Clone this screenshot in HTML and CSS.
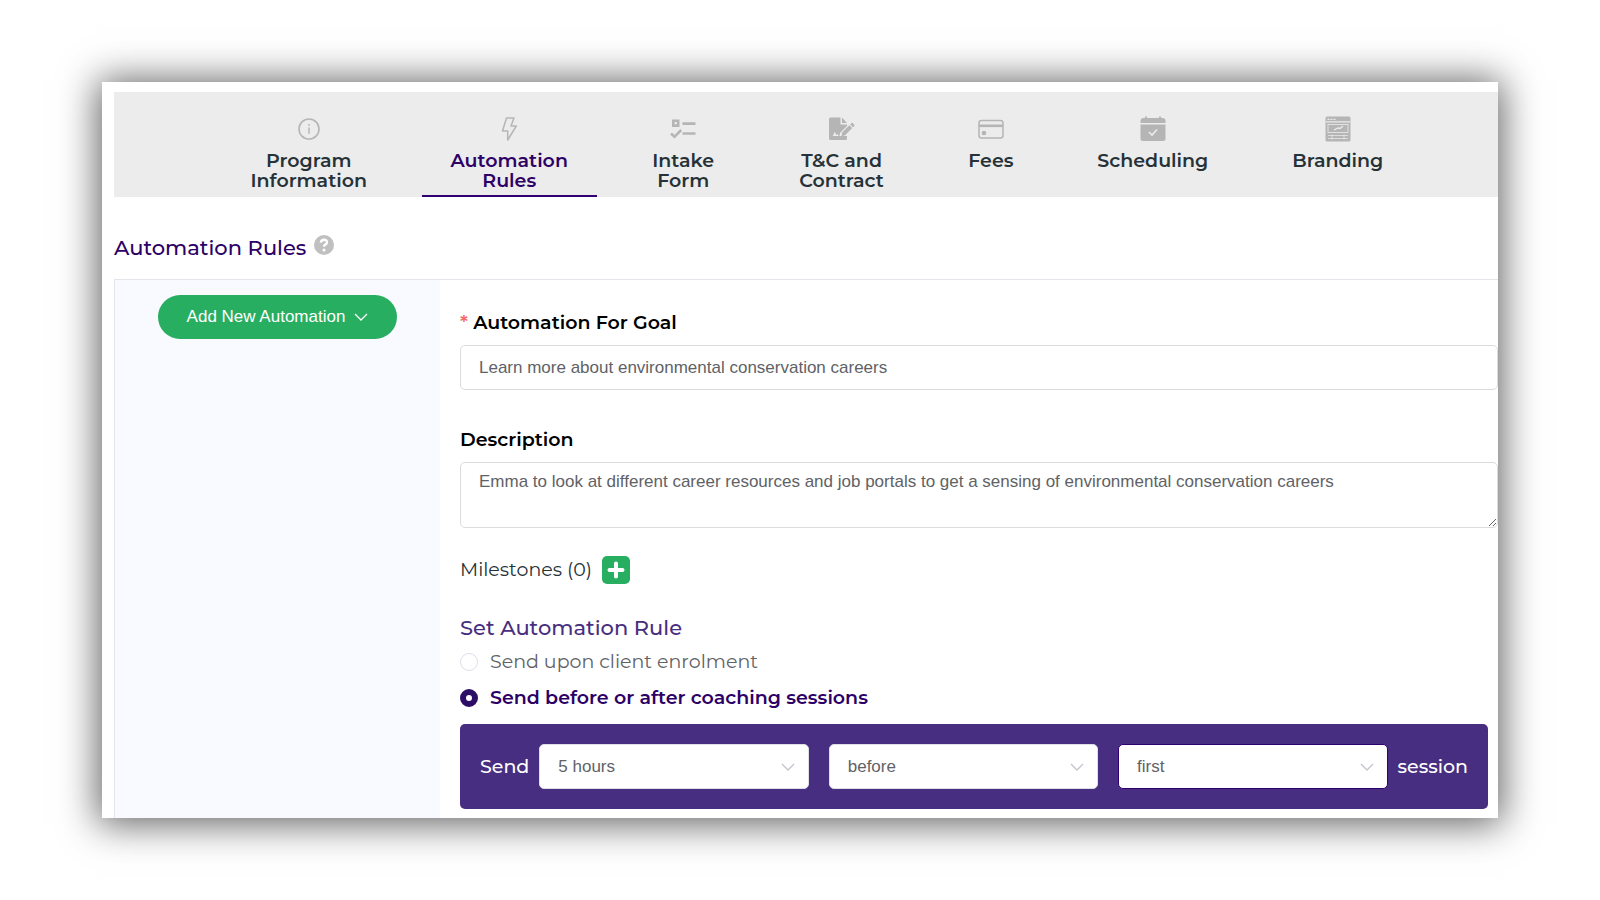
FILE: index.html
```html
<!DOCTYPE html>
<html lang="en">
<head>
    <meta charset="UTF-8">
    <meta name="viewport" content="width=device-width, initial-scale=1.0">
    <title>Automation Rules</title>
    <link rel="stylesheet" href="styles.css">
</head>
<body>
    <main class="panel">
        <!-- Program setup steps -->
        <nav class="tabs">
            <a href="#" class="tab">
                <svg class="icon" viewBox="0 0 26 26" fill="none" stroke="currentColor">
                    <circle cx="13" cy="13" r="10" stroke-width="1.6"/>
                    <path d="M13 11.6v6.2M13 8v1.7" stroke-width="1.5"/>
                </svg>
                <span>Program Information</span>
            </a>
            <a href="#" class="tab active">
                <svg class="icon" viewBox="0 0 26 26" fill="none" stroke="currentColor" stroke-width="1.5" stroke-linejoin="round">
                    <path d="M10.500 2H18l-3 8h5.300L11.700 24v-9H6.500z"/>
                </svg>
                <span>Automation Rules</span>
            </a>
            <a href="#" class="tab">
                <svg class="icon" viewBox="0 0 26 26" fill="none" stroke="currentColor">
                    <path d="M3.300 4.700h4.900v4.900H3.300z" stroke-width="2.600"/>
                    <path d="M12.500 7.600h13M12.500 17.500h13" stroke-width="2.600"/>
                    <path d="M1 17.500l3.500 3.300L11.200 14" stroke-width="2.600"/>
                </svg>
                <span>Intake Form</span>
            </a>
            <a href="#" class="tab">
                <svg class="icon" viewBox="0 0 26 26" fill="currentColor">
                    <path d="M2 1.500h9.500v7H18l.2 1.300-7.200 7.300-.3 2.600H9.500L8.300 18l-1.100 1-1.300-3.300L3.700 20H18v2.500q0 1.500-1.500 1.500h-15Q0 24 0 22.500V3q0-1.500 1.500-1.500z"/>
                    <path d="M13 1.500L18 7h-5zM12.500 20l.6-3.400 7.300-7.300 2.800 2.800-7.300 7.300zM21.200 8.400l1.300-1.300q.6-.6 1.200 0l1.600 1.600q.6.6 0 1.200L24 11.200z"/>
                </svg>
                <span>T&amp;C and Contract</span>
            </a>
            <a href="#" class="tab">
                <svg class="icon" viewBox="0 0 26 26" fill="none" stroke="currentColor">
                    <rect x="1" y="4.500" width="24" height="17.500" rx="2.500" stroke-width="1.500"/>
                    <path d="M1 9.800h24" stroke-width="2.600"/>
                    <circle cx="6" cy="17" r="2.300" fill="currentColor" stroke="none"/>
                </svg>
                <span>Fees</span>
            </a>
            <a href="#" class="tab">
                <svg class="icon" viewBox="0 0 26 26" fill="currentColor">
                    <path d="M.5 7V5q0-3 3-3H5V.5h2V2h12V.5h2V2h1.500q3 0 3 3v2z"/>
                    <path d="M.5 8.500h25v14q0 2.500-2.500 2.500H3Q.5 25 .5 22.500z"/>
                    <path d="M9 16l3 3 5-5.500" fill="none" stroke="#ececec" stroke-width="1.600"/>
                </svg>
                <span>Scheduling</span>
            </a>
            <a href="#" class="tab">
                <svg class="icon" viewBox="0 0 26 26" fill="currentColor">
                    <rect x=".5" y=".5" width="25" height="25" rx="1.500"/>
                    <g fill="none" stroke="#ececec">
                        <path d="M1 5.800h24M2.500 3.300h2M5.500 3.300h2M8.500 3.300h2" stroke-width="1.200"/>
                        <rect x="3" y="8.500" width="20" height="8" stroke-width=".8"/>
                        <path d="M9 14l4-2 2 .5 3-2.500" stroke-width="1.300"/>
                        <path d="M3 19.500h20M3 22.500h20M7 18.500v5M19 18.500v5" stroke-width=".7"/>
                    </g>
                </svg>
                <span>Branding</span>
            </a>
        </nav>

        <h1 class="page-title">
            Automation Rules
            <svg class="help" viewBox="0 0 20 20">
                <circle cx="10" cy="10" r="10" fill="#c0c0c0"/>
                <path d="M6.800 7.600Q7.200 4.700 10 4.700t3 2.500q0 1.500-1.700 2.400Q10 10.300 10 11.800" fill="none" stroke="#fff" stroke-width="2.400"/>
                <circle cx="10" cy="15" r="1.500" fill="#fff"/>
            </svg>
        </h1>

        <div class="content">
            <aside class="sidebar">
                <button type="button" class="add-btn">
                    Add New Automation
                    <svg class="chevron" viewBox="0 0 14 8"><path d="M1 1l6 6 6-6"/></svg>
                </button>
            </aside>

            <form class="rule-form">
                <label class="label" for="goal"><span class="required">*</span> Automation For Goal</label>
                <input class="field" type="text" id="goal" value="Learn more about environmental conservation careers">

                <label class="label spaced" for="description">Description</label>
                <textarea class="field area" id="description">Emma to look at different career resources and job portals to get a sensing of environmental conservation careers</textarea>

                <div class="milestones">
                    <span>Milestones (0)</span>
                    <button type="button" class="plus-btn" aria-label="Add milestone">
                        <svg viewBox="0 0 28 28"><path d="M14 7.500v13M7.500 14h13"/></svg>
                    </button>
                </div>

                <h2 class="rule-title">Set Automation Rule</h2>
                <label class="option">
                    <input type="radio" name="rule" value="enrolment">
                    <span>Send upon client enrolment</span>
                </label>
                <label class="option">
                    <input type="radio" name="rule" value="sessions" checked>
                    <span>Send before or after coaching sessions</span>
                </label>

                <!-- Timing of the message -->
                <div class="timing">
                    <label for="delay">Send</label>
                    <div class="selects">
                        <div class="select">
                            <select id="delay"><option>5 hours</option></select>
                            <svg class="chevron" viewBox="0 0 14 8"><path d="M1 1l6 6 6-6"/></svg>
                        </div>
                        <div class="select">
                            <select aria-label="Before or after"><option>before</option><option>after</option></select>
                            <svg class="chevron" viewBox="0 0 14 8"><path d="M1 1l6 6 6-6"/></svg>
                        </div>
                        <div class="select current">
                            <select id="session"><option>first</option></select>
                            <svg class="chevron" viewBox="0 0 14 8"><path d="M1 1l6 6 6-6"/></svg>
                        </div>
                    </div>
                    <label for="session">session</label>
                </div>
            </form>
        </div>
    </main>
</body>
</html>
```
FILE: styles.css
```css
* {
    box-sizing: border-box;
}
body {
    margin: 0;
    padding: 82px 102px;
    background: #fff;
    color: #263238;
    font-family: Montserrat, Inter, sans-serif;
    font-size: 19px;
    line-height: 24px;
}
.panel {
    padding: 10px 0 0 12px;
    background: #fff;
    box-shadow: 0 2px 36px 4px rgba(0, 0, 0, 0.62);
    overflow: hidden;
}
.tabs {
    display: grid;
    grid-template-columns: 175fr 175fr 122fr 144fr 104fr 169fr 150fr;
    column-gap: 25px;
    height: 105px;
    padding: 0 85px 0 107px;
    background: #ececec;
}
.tab {
    display: flex;
    flex-direction: column;
    align-items: center;
    padding: 24px 20px 0;
    border-bottom: 2px solid transparent;
    color: #263238;
    font-weight: 600;
    line-height: 20px;
    text-align: center;
    text-decoration: none;
}
.tab.active {
    border-color: #310070;
    color: #2c0066;
}
.icon {
    width: 26px;
    height: 26px;
    margin-bottom: 9px;
    color: #b5b5b5;
    flex-shrink: 0;
}
.page-title {
    display: flex;
    align-items: center;
    gap: 8px;
    margin: 38px 0 19px;
    color: #2c0066;
    font-size: 21px;
    font-weight: 500;
    line-height: 25px;
}
.help {
    width: 20px;
    height: 20px;
    margin-bottom: 5px;
}
.content {
    display: flex;
    border-top: 1px solid #e4e6ec;
    border-left: 1px solid #e4e6ec;
}
.sidebar {
    flex: 0 0 325px;
    padding: 15px 43px;
    background: #f9faff;
}
.add-btn {
    display: flex;
    align-items: center;
    justify-content: center;
    gap: 9px;
    width: 100%;
    height: 44px;
    padding: 0;
    border: 0;
    border-radius: 22px;
    background: #27ae60;
    color: #fff;
    font-family: "Liberation Sans", Arial, sans-serif;
    font-size: 17px;
    cursor: pointer;
}
.chevron {
    width: 14px;
    height: 8px;
    fill: none;
    stroke: currentColor;
    stroke-width: 1.3;
}
.rule-form {
    flex: 1;
    min-width: 0;
    padding: 31px 0 9px 20px;
}
.label {
    display: block;
    margin-bottom: 10px;
    color: #000;
    font-weight: 600;
}
.label.spaced {
    margin-top: 38px;
}
.required {
    color: #f56c6c;
}
.field {
    display: block;
    width: 100%;
    height: 45px;
    padding: 0 18px;
    border: 1px solid #dcdcdc;
    border-radius: 5px;
    background: #fff;
    color: #606266;
    font-family: "Liberation Sans", Arial, sans-serif;
    font-size: 17px;
}
.area {
    height: 66px;
    padding: 7px 18px;
    line-height: 24px;
    resize: vertical;
}
.milestones {
    display: flex;
    align-items: center;
    gap: 10px;
    margin: 28px 0 32px;
}
.plus-btn {
    width: 28px;
    height: 28px;
    padding: 0;
    border: 0;
    border-radius: 5px;
    background: #27ae60;
    cursor: pointer;
}
.plus-btn svg {
    display: block;
    stroke: #fff;
    stroke-width: 4;
    stroke-linecap: round;
}
.rule-title {
    margin: 0 0 10px;
    color: #482e80;
    font-size: 21px;
    font-weight: 500;
    line-height: 24px;
}
.option {
    display: flex;
    align-items: center;
    gap: 12px;
    margin-bottom: 12px;
    color: #606266;
}
.option input {
    appearance: none;
    width: 18px;
    height: 18px;
    margin: 0;
    border: 1px solid #dcdfe6;
    border-radius: 50%;
    background: #fff;
}
.option input:checked {
    border: 6px solid #2c0e66;
}
.option input:checked + span {
    color: #2c0066;
    font-weight: 600;
}
.timing {
    display: flex;
    align-items: center;
    gap: 10px;
    margin: 14px 10px 0 0;
    padding: 20px;
    border-radius: 5px;
    background: #482e80;
    color: #fff;
    font-weight: 500;
}
.selects {
    display: flex;
    flex: 1;
    gap: 20px;
}
.select {
    position: relative;
    flex: 1;
}
.select select {
    appearance: none;
    display: block;
    width: 100%;
    height: 45px;
    padding: 0 18px;
    border: 1px solid #dcdfe6;
    border-radius: 5px;
    background: #fff;
    color: #606266;
    font-family: "Liberation Sans", Arial, sans-serif;
    font-size: 17px;
}
.select.current select {
    border-color: #310070;
}
.select .chevron {
    position: absolute;
    top: 19px;
    right: 14px;
    color: #c0c4cc;
    pointer-events: none;
}
```
